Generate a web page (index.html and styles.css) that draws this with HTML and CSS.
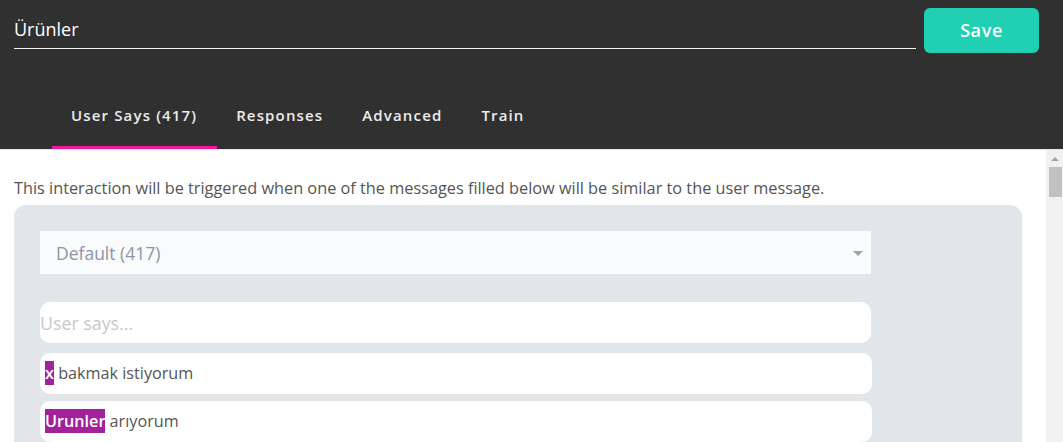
FILE: index.html
```html
<!DOCTYPE html>
<html lang="tr">
<head>
<meta charset="utf-8">
<title>Ürünler</title>
<link rel="stylesheet" href="styles.css">
</head>
<body>
<header class="header">
  <div class="top-row">
    <div class="title-field">Ürünler</div>
    <button class="save-btn">Save</button>
  </div>
  <nav class="tabs">
    <a class="tab active">User Says (417)</a>
    <a class="tab">Responses</a>
    <a class="tab">Advanced</a>
    <a class="tab">Train</a>
  </nav>
</header>
<div class="body-row">
  <main class="content">
    <p class="desc">This interaction will be triggered when one of the messages filled below will be similar to the user message.</p>
    <section class="panel">
      <div class="dropdown">
        <span>Default (417)</span>
        <span class="caret"></span>
      </div>
      <div class="says-input">User says...</div>
      <div class="say-row"><mark class="ent">x</mark> bakmak istiyorum</div>
      <div class="say-row"><mark class="ent">Urunler</mark> arıyorum</div>
    </section>
  </main>
  <div class="scrollbar">
    <div class="sb-arrow"></div>
    <div class="sb-thumb"></div>
  </div>
</div>
</body>
</html>
```

FILE: styles.css
```css
* { box-sizing: border-box; }
html, body { margin: 0; height: 100%; }
body {
  font-family: "Open Sans", "Noto Sans", sans-serif;
  background: #fff;
  overflow: hidden;
  display: flex;
  flex-direction: column;
}
.header {
  background: #303030;
  height: 149px;
  padding: 8px 24px 0 14px;
  flex: none;
}
.top-row {
  display: flex;
  align-items: flex-start;
  height: 45px;
  margin-bottom: 36px;
}
.title-field {
  flex: 1;
  margin-right: 8px;
  color: #fff;
  font-size: 18px;
  height: 41px;
  padding-top: 9px;
  line-height: 24px;
  border-bottom: 1px solid #f2f2f2;
}
.save-btn {
  width: 115px;
  height: 45px;
  border: none;
  border-radius: 6px;
  background: #21cfb2;
  color: #fff;
  font-family: inherit;
  font-size: 18px;
  font-weight: 600;
  letter-spacing: 0.6px;
  padding: 0 0 2px;
}
.tabs {
  display: flex;
  margin-left: 38px;
}
.tab {
  display: flex;
  align-items: center;
  height: 60px;
  padding: 0 20px 5px 19px;
  border-bottom: 3px solid transparent;
  color: #ececec;
  font-size: 15px;
  font-weight: 600;
  letter-spacing: 1.15px;
}
.tab.active { border-bottom-color: #f0189c; }
.body-row {
  flex: 1;
  display: flex;
  min-height: 0;
  border-top: 1px solid #e6e6e6;
}
.content {
  flex: 1;
  overflow: hidden;
  padding: 27px 24px 0 14px;
}
.desc {
  margin: 0 0 6px;
  font-size: 16.3px;
  line-height: 22px;
  color: #555;
  white-space: nowrap;
}
.panel {
  background: #e3e6e9;
  border-radius: 12px;
  padding: 26px 26px 40px;
}
.dropdown {
  width: 831px;
  height: 43px;
  background: #f9fbfd;
  display: flex;
  align-items: center;
  justify-content: space-between;
  padding: 0 8px 0 16px;
  font-size: 17.5px;
  color: #8c96a6;
  margin-bottom: 28px;
}
.caret {
  width: 0;
  height: 0;
  border-left: 5px solid transparent;
  border-right: 5px solid transparent;
  border-top: 5px solid #9aa1ad;
  margin-top: 2px;
}
.says-input {
  width: 831px;
  height: 42px;
  background: #fff;
  border-radius: 10px;
  border-bottom: 1px solid #e2e2e2;
  font-size: 17.8px;
  line-height: 42px;
  color: #c9c9c9;
  margin-bottom: 9px;
}
.say-row {
  width: 832px;
  height: 41px;
  background: #fff;
  border-radius: 10px;
  padding: 0 5px;
  font-size: 16.2px;
  line-height: 41px;
  color: #555;
  margin-bottom: 7px;
}
.ent {
  background: #a3229c;
  color: #fff;
  font-weight: 600;
  padding: 1px 0 1px;
}
.scrollbar {
  width: 17px;
  flex: none;
  background: #f1f1f1;
  display: flex;
  flex-direction: column;
  align-items: center;
}
.sb-arrow {
  margin-top: 7px;
  width: 0;
  height: 0;
  border-left: 4px solid transparent;
  border-right: 4px solid transparent;
  border-bottom: 4px solid #a3a3a3;
}
.sb-thumb {
  margin-top: 6px;
  width: 13px;
  height: 30px;
  background: #c1c1c1;
  margin-left: 2px;
}
```
